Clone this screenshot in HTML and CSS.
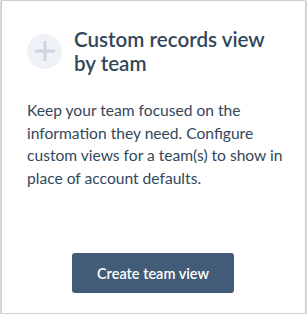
FILE: index.html
```html
<!DOCTYPE html>
<html>
<head>
	<title>Custom records view by team</title>
	<meta charset=utf-8>
	<meta name=viewport content="width=device-width, initial-scale=1">
	<link rel="stylesheet" href="styles.css">
</head>
<body>
	<div class="card">
		<div class="card-head">
			<div class="plus-icon">
				<svg width="20" height="20" viewBox="0 0 20 20">
					<rect x="0" y="8.5" width="20" height="3" fill="#cbd6e2"/>
					<rect x="8.5" y="0" width="3" height="20" fill="#cbd6e2"/>
				</svg>
			</div>
			<h2 class="card-title">Custom records view by team</h2>
		</div>
		<p class="card-text">Keep your team focused on the information they need. Configure custom views for a team(s) to show in place of account defaults.</p>
		<div class="card-foot">
			<button class="btn">Create team view</button>
		</div>
	</div>
</body>
</html>
```

FILE: styles.css
```css
	body{
		margin:0;
		background: #fff;
		font-family: Lato, "Liberation Sans", sans-serif;
		color: #33475b;
	}
	.card{
		margin: 0 1px;
		height: 314px;
		box-sizing: border-box;
		border: 1px solid #cfcfcf;
		box-shadow: 0 1px 2px rgba(0,0,0,0.45);
		background: #fff;
		padding: 26px 16px 20px 25px;
		display: flex;
		flex-direction: column;
	}
	.card-head{
		display: flex;
		align-items: center;
		gap: 12px;
	}
	.plus-icon{
		width: 35px;
		height: 35px;
		flex: none;
		border-radius: 50%;
		background: #eef2f7;
		display: flex;
		align-items: center;
		justify-content: center;
	}
	.card-title{
		margin: 0;
		font-size: 20.6px;
		line-height: 24px;
		font-weight: 600;
		color: #33475b;
	}
	.card-text{
		margin: 24px 0 0;
		font-size: 15.6px;
		line-height: 22.6px;
	}
	.card-foot{
		margin-top: auto;
		display: flex;
		justify-content: center;
		padding-right: 10px;
	}
	.btn{
		width: 162px;
		height: 40px;
		border: none;
		border-radius: 3px;
		background: #425b76;
		color: #fff;
		font-family: Lato, "Liberation Sans", sans-serif;
		font-size: 14.5px;
		font-weight: 600;
		cursor: pointer;
	}
```
